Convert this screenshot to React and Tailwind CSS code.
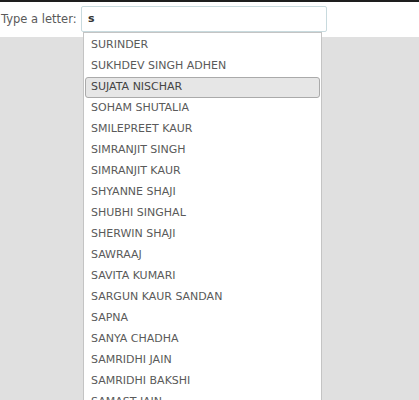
import React from "react";

const names = [
  "SURINDER",
  "SUKHDEV SINGH ADHEN",
  "SUJATA NISCHAR",
  "SOHAM SHUTALIA",
  "SMILEPREET KAUR",
  "SIMRANJIT SINGH",
  "SIMRANJIT KAUR",
  "SHYANNE SHAJI",
  "SHUBHI SINGHAL",
  "SHERWIN SHAJI",
  "SAWRAAJ",
  "SAVITA KUMARI",
  "SARGUN KAUR SANDAN",
  "SAPNA",
  "SANYA CHADHA",
  "SAMRIDHI JAIN",
  "SAMRIDHI BAKSHI",
  "SAMAST JAIN",
  "SAHIL",
];

export default function App() {
  return (
    <div
      className="relative w-[419px] h-[400px] overflow-hidden bg-[#e0e0e0]"
      style={{ fontFamily: '"DejaVu Sans", Verdana, sans-serif' }}
    >
      <div className="h-[2px] bg-[#1e1e1e]" />
      <div className="h-[35px] bg-white flex items-start pt-[4px]">
        <span className="text-[11.5px] text-[#5a5a5a] leading-[26px] pl-[1px] w-[81px]">
          Type a letter:
        </span>
        <div className="w-[246px] h-[26px] border border-[#c8dade] bg-white rounded-[2px] flex items-center pl-[6px]">
          <span className="text-[11px] font-bold text-[#333]">s</span>
        </div>
      </div>
      <div className="absolute left-[83px] top-[32px] w-[239px] h-[400px] bg-white border border-[#c4c4c4] pt-[2px] px-[1px]">
        {names.map((n, i) =>
          i === 2 ? (
            <div
              key={n}
              className="h-[21px] flex items-center pl-[5px] text-[11px] text-[#444] bg-[#e6e6e6] border border-[#aaaaaa] rounded-[3px]"
            >
              {n}
            </div>
          ) : (
            <div
              key={n}
              className="h-[21px] flex items-center pl-[6px] text-[11px] text-[#5a5a5a]"
            >
              {n}
            </div>
          )
        )}
      </div>
    </div>
  );
}
